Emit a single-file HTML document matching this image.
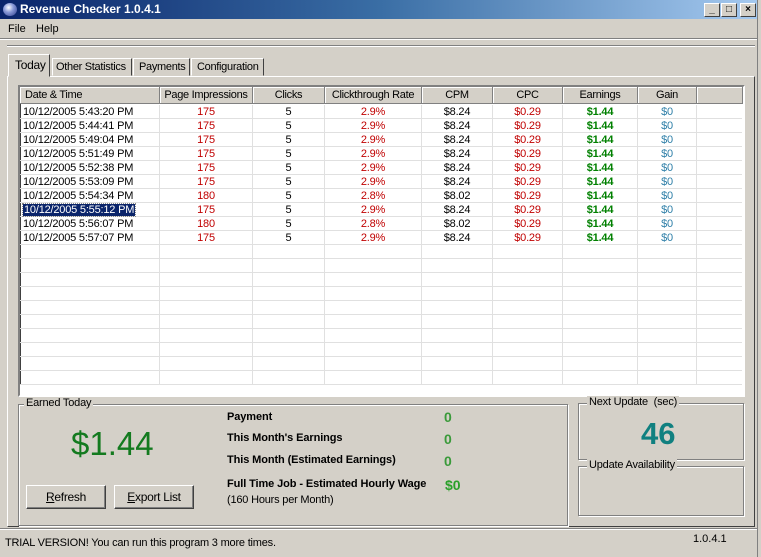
<!DOCTYPE html>
<html><head><style>
*{margin:0;padding:0;box-sizing:border-box}
body{width:761px;height:557px;background:#d4d0c8;font-family:"Liberation Sans",sans-serif;font-size:11px;position:relative;overflow:hidden;color:#000}
.a{position:absolute;white-space:nowrap}
.title{left:0;top:0;width:761px;height:19px;background:linear-gradient(90deg,#0a246a,#3a6ea5 50%,#a6caf0);color:#fff;font-weight:bold;font-size:12px;line-height:19px;padding-left:20px}
.btn3{width:16px;height:14px;background:#d4d0c8;border:1px solid;border-color:#fff #404040 #404040 #fff;top:3px;font-size:10px;line-height:11px;text-align:center;color:#000;font-weight:bold}
.hdr{top:87px;height:17px;background:#d4d0c8;border-right:1px solid #808080;border-bottom:1px solid #808080;box-shadow:inset 1px 1px 0 #fff;text-align:center;line-height:16px;letter-spacing:-0.3px;overflow:hidden}
.row{position:absolute;left:20px;width:722px;height:14px;line-height:14px;border-bottom:1px solid #e0e0e0;letter-spacing:-0.2px}
.c{position:absolute;top:0;height:14px;text-align:center;border-right:1px solid #e0e0e0}
.r{color:#c00000}.g{color:#008000;font-weight:bold}.b{color:#2e7fa8}
.grp{border:1px solid #808080;box-shadow:1px 1px 0 #fff, inset 1px 1px 0 #fff}
.lg{background:#d4d0c8;padding:0 2px;top:-8px;left:6px;position:absolute;white-space:nowrap;letter-spacing:-0.2px}
.pb{width:80px;height:24px;border:1px solid;border-color:#fff #404040 #404040 #fff;box-shadow:inset -1px -1px 0 #808080;text-align:center;line-height:22px;font-size:12px;letter-spacing:-0.3px}
.bl{font-weight:bold;font-size:11px;letter-spacing:-0.1px}
.gz{color:#3a9a3a;font-weight:bold;font-size:14px}
.tab{border:1px solid;border-color:#fff #404040 transparent #fff;font-size:11px;letter-spacing:-0.3px}
</style></head><body>
<div class="a title">Revenue Checker 1.0.4.1</div>
<div class="a" style="left:3px;top:3px;width:14px;height:13px;border-radius:50%;background:radial-gradient(circle at 40% 35%,#fff,#8a9ad8 40%,#2a3a8a)"></div>
<div class="a btn3" style="left:704px">_</div>
<div class="a btn3" style="left:721px">□</div>
<div class="a btn3" style="left:740px">×</div>
<div class="a" style="left:8px;top:23px;font-size:11px">File</div>
<div class="a" style="left:36px;top:23px;font-size:11px">Help</div>
<div class="a" style="left:0;top:38px;width:761px;height:1px;background:#808080"></div>
<div class="a" style="left:0;top:39px;width:761px;height:1px;background:#fff"></div>
<div class="a" style="left:7px;top:76px;width:748px;height:451px;border:1px solid;border-color:#fff #404040 #404040 #fff"></div>
<div class="a" style="left:7px;top:45px;width:748px;height:1px;background:#808080"></div>
<div class="a" style="left:7px;top:46px;width:748px;height:1px;background:#fff"></div>
<div class="a tab" style="left:8px;top:54px;width:42px;height:23px;background:#d4d0c8;padding:3px 0 0 6px;font-size:12px">Today</div>
<div class="a tab" style="left:52px;top:58px;width:80px;height:18px;padding:2px 0 0 3px">Other Statistics</div>
<div class="a tab" style="left:133px;top:58px;width:57px;height:18px;padding:2px 0 0 5px">Payments</div>
<div class="a tab" style="left:191px;top:58px;width:73px;height:18px;padding:2px 0 0 5px">Configuration</div>
<div class="a" style="left:18px;top:85px;width:727px;height:312px;background:#fff;border:2px solid;border-color:#808080 #fff #fff #808080;box-shadow:inset 1px 1px 0 #404040"></div>
<div class="a hdr" style="left:20px;width:140px;text-align:left;padding-left:5px">Date &amp; Time</div>
<div class="a hdr" style="left:160px;width:93px">Page Impressions</div>
<div class="a hdr" style="left:253px;width:72px">Clicks</div>
<div class="a hdr" style="left:325px;width:97px">Clickthrough Rate</div>
<div class="a hdr" style="left:422px;width:71px">CPM</div>
<div class="a hdr" style="left:493px;width:70px">CPC</div>
<div class="a hdr" style="left:563px;width:75px">Earnings</div>
<div class="a hdr" style="left:638px;width:59px">Gain</div>
<div class="a hdr" style="left:697px;width:46px"></div>
<div id="rows"></div>
<script>
var d=[["5:43:20",175,"2.9%","$8.24"],["5:44:41",175,"2.9%","$8.24"],["5:49:04",175,"2.9%","$8.24"],["5:51:49",175,"2.9%","$8.24"],["5:52:38",175,"2.9%","$8.24"],["5:53:09",175,"2.9%","$8.24"],["5:54:34",180,"2.8%","$8.02"],["5:55:12",175,"2.9%","$8.24"],["5:56:07",180,"2.8%","$8.02"],["5:57:07",175,"2.9%","$8.24"]];
var h="";
for(var i=0;i<20;i++){var t=d[i];var y=105+i*14;h+='<div class="row" style="top:'+y+'px">';
var cs=[[0,140],[140,93],[233,72],[305,97],[402,71],[473,70],[543,75],[618,59]];
var v=t?[(i==7?'<span style="background:#0a246a;color:#fff;outline:1px dotted #888;padding:0 1px">10/12/2005 '+t[0]+' PM</span>':'10/12/2005 '+t[0]+' PM'),'<span class=r>'+t[1]+'</span>','5','<span class=r>'+t[2]+'</span>',t[3],'<span class=r>$0.29</span>','<span class=g>$1.44</span>','<span class=b>$0</span>']:["","","","","","","",""];
for(var j=0;j<8;j++){h+='<div class="c" style="left:'+cs[j][0]+'px;width:'+cs[j][1]+'px;'+(j==0?'text-align:left;padding-left:3px;':'')+'">'+v[j]+'</div>';}
h+='</div>';}
document.getElementById("rows").innerHTML=h;
</script>
<div class="a" style="left:20px;top:385px;width:722px;height:10px;background:#fff"></div>
<div class="a grp" style="left:18px;top:404px;width:550px;height:122px"><span class="lg" style="left:5px">Earned Today</span></div>
<div class="a" style="left:71px;top:425px;font-size:33px;color:#137a1f">$1.44</div>
<div class="a pb" style="left:26px;top:485px"><u>R</u>efresh</div>
<div class="a pb" style="left:114px;top:485px;width:80px"><u>E</u>xport List</div>
<div class="a bl" style="left:227px;top:411px">Payment</div>
<div class="a bl" style="left:227px;top:432px">This Month's Earnings</div>
<div class="a bl" style="left:227px;top:454px">This Month (Estimated Earnings)</div>
<div class="a bl" style="left:227px;top:478px">Full Time Job - Estimated Hourly Wage</div>
<div class="a" style="left:227px;top:494px;letter-spacing:-0.2px">(160 Hours per Month)</div>
<div class="a gz" style="left:444px;top:409px">0</div>
<div class="a gz" style="left:444px;top:431px">0</div>
<div class="a gz" style="left:444px;top:453px">0</div>
<div class="a gz" style="left:445px;top:477px;color:#2aa02a">$0</div>
<div class="a grp" style="left:578px;top:403px;width:166px;height:57px"><span class="lg" style="left:8px;font-size:11px">Next Update&nbsp; (sec)</span></div>
<div class="a" style="left:641px;top:416px;font-size:31px;font-weight:bold;color:#108080">46</div>
<div class="a grp" style="left:578px;top:466px;width:166px;height:50px"><span class="lg" style="left:8px">Update Availability</span></div>
<div class="a" style="left:0;top:528px;width:761px;height:1px;background:#808080"></div>
<div class="a" style="left:0;top:529px;width:761px;height:1px;background:#fff"></div>
<div class="a" style="left:5px;top:537px;font-size:11px;letter-spacing:-0.2px">TRIAL VERSION! You can run this program 3 more times.</div>
<div class="a" style="left:693px;top:533px;font-size:11px">1.0.4.1</div>
<div class="a" style="left:757px;top:0;width:4px;height:557px;background:#d4d0c8;border-left:1px solid #808080"></div>
</body></html>
